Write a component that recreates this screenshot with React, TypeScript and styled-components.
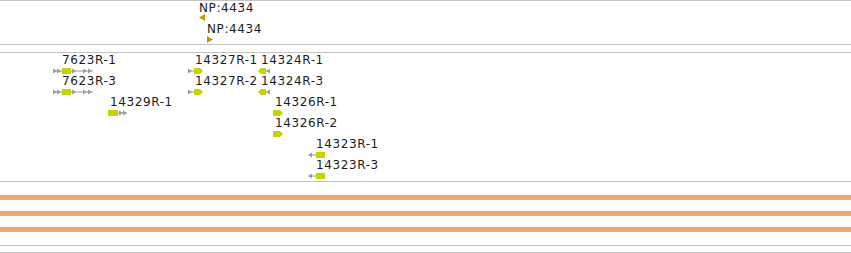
import React from 'react';
import styled, { createGlobalStyle } from 'styled-components';

const Global = createGlobalStyle`
  html, body { margin: 0; padding: 0; background: #ffffff; }
  body { font-family: "DejaVu Sans", Verdana, sans-serif; }
`;

const Page = styled.div`
  width: 851px;
  height: 253px;
  display: flex;
  flex-direction: column;
  overflow: hidden;
  background: #ffffff;
`;

const Rule = styled.div`
  flex: none;
  height: 1px;
  background: #c4c4c4;
`;

const Gap = styled.div<{ $h: number }>`
  flex: none;
  height: ${(p) => p.$h}px;
`;

const Track = styled.div<{ $h: number }>`
  flex: none;
  position: relative;
  height: ${(p) => p.$h}px;
`;

const Label = styled.span<{ $x: number; $y: number }>`
  position: absolute;
  left: ${(p) => p.$x}px;
  top: ${(p) => p.$y}px;
  font-size: 12px;
  line-height: 14px;
  letter-spacing: 0.6px;
  color: #1c1c1c;
  white-space: nowrap;
`;

const Glyph = styled.svg<{ $x: number; $y: number }>`
  position: absolute;
  left: ${(p) => p.$x}px;
  top: ${(p) => p.$y}px;
  display: block;
  overflow: visible;
`;

const BarTrack = styled.div`
  flex: none;
  display: flex;
  flex-direction: column;
  gap: 11px;
  padding: 13px 0;
`;

const Bar = styled.div`
  height: 5px;
  background: #f4a470;
`;

const GREEN = '#c6d300';
const GREY = '#9c9c9c';
const GOLD = '#c8940c';

type Part =
  | { k: 'line'; x1: number; x2: number }
  | { k: 'chev'; x: number; d: 'r' | 'l' }
  | { k: 'box'; x: number; w: number; tip?: 'r' | 'l' };

const renderPart = (p: Part, i: number) => {
  if (p.k === 'line') return <rect key={i} x={p.x1} y={2.5} width={p.x2 - p.x1} height={1} fill={GREY} />;
  if (p.k === 'chev') {
    const pts = p.d === 'r' ? `${p.x},0.5 ${p.x + 4},3 ${p.x},5.5` : `${p.x + 4},0.5 ${p.x},3 ${p.x + 4},5.5`;
    return <polygon key={i} points={pts} fill={GREY} />;
  }
  const { x, w, tip } = p;
  let pts = `${x},0 ${x + w},0 ${x + w},6 ${x},6`;
  if (tip === 'r') pts = `${x},0 ${x + w - 3},0 ${x + w},3 ${x + w - 3},6 ${x},6`;
  if (tip === 'l') pts = `${x + 3},0 ${x + w},0 ${x + w},6 ${x + 3},6 ${x},3`;
  return <polygon key={i} points={pts} fill={GREEN} />;
};

const GLYPHS: Record<string, { w: number; parts: Part[] }> = {
  A: {
    w: 41,
    parts: [
      { k: 'line', x1: 0, x2: 9 },
      { k: 'chev', x: 0, d: 'r' },
      { k: 'chev', x: 4, d: 'r' },
      { k: 'box', x: 9, w: 9 },
      { k: 'line', x1: 18, x2: 40 },
      { k: 'chev', x: 19, d: 'r' },
      { k: 'chev', x: 30, d: 'r' },
      { k: 'chev', x: 35, d: 'r' },
    ],
  },
  B: {
    w: 20,
    parts: [
      { k: 'box', x: 0, w: 10 },
      { k: 'line', x1: 10, x2: 19 },
      { k: 'chev', x: 11, d: 'r' },
      { k: 'chev', x: 15, d: 'r' },
    ],
  },
  C: {
    w: 16,
    parts: [
      { k: 'line', x1: 0, x2: 6 },
      { k: 'chev', x: 0, d: 'r' },
      { k: 'box', x: 6, w: 9, tip: 'r' },
    ],
  },
  D: {
    w: 13,
    parts: [
      { k: 'box', x: 0, w: 8, tip: 'l' },
      { k: 'line', x1: 8, x2: 12 },
      { k: 'chev', x: 8, d: 'l' },
    ],
  },
  E: {
    w: 11,
    parts: [{ k: 'box', x: 0, w: 10, tip: 'r' }],
  },
  F: {
    w: 17,
    parts: [
      { k: 'line', x1: 1, x2: 8 },
      { k: 'chev', x: 0, d: 'l' },
      { k: 'box', x: 8, w: 9 },
    ],
  },
};

const Gene = ({ type, x, y }: { type: string; x: number; y: number }) => {
  const g = GLYPHS[type];
  return (
    <Glyph $x={x} $y={y} width={g.w} height={6} viewBox={`0 0 ${g.w} 6`}>
      {g.parts.map(renderPart)}
    </Glyph>
  );
};

const Marker = ({ x, y, dir }: { x: number; y: number; dir: 'l' | 'r' }) => (
  <Glyph $x={x} $y={y} width={6} height={7} viewBox="0 0 6 7">
    <polygon points={dir === 'l' ? '0,3.5 6,0 6,7' : '0,0 6,3.5 0,7'} fill={GOLD} />
  </Glyph>
);

type Feat = { name: string; lx: number; gx: number; row: number; type: string };

const FEATURES: Feat[] = [
  { name: '7623R-1', lx: 62, gx: 53, row: 0, type: 'A' },
  { name: '7623R-3', lx: 62, gx: 53, row: 1, type: 'A' },
  { name: '14329R-1', lx: 110, gx: 108, row: 2, type: 'B' },
  { name: '14327R-1', lx: 195, gx: 188, row: 0, type: 'C' },
  { name: '14327R-2', lx: 195, gx: 188, row: 1, type: 'C' },
  { name: '14324R-1', lx: 261, gx: 258, row: 0, type: 'D' },
  { name: '14324R-3', lx: 261, gx: 258, row: 1, type: 'D' },
  { name: '14326R-1', lx: 275, gx: 273, row: 2, type: 'E' },
  { name: '14326R-2', lx: 275, gx: 273, row: 3, type: 'E' },
  { name: '14323R-1', lx: 316, gx: 308, row: 4, type: 'F' },
  { name: '14323R-3', lx: 316, gx: 308, row: 5, type: 'F' },
];

export default function App() {
  return (
    <>
      <Global />
      <Page>
        <Rule />
        <Track $h={43}>
          <Label $x={199} $y={0}>NP:4434</Label>
          <Marker x={199} y={13} dir="l" />
          <Label $x={207} $y={21}>NP:4434</Label>
          <Marker x={207} y={35} dir="r" />
        </Track>
        <Rule />
        <Gap $h={7} />
        <Rule />
        <Track $h={128}>
          {FEATURES.map((f) => (
            <React.Fragment key={f.name}>
              <Label $x={f.lx} $y={f.row * 21}>{f.name}</Label>
              <Gene type={f.type} x={f.gx} y={f.row * 21 + 15} />
            </React.Fragment>
          ))}
        </Track>
        <Rule />
        <BarTrack>
          <Bar />
          <Bar />
          <Bar />
        </BarTrack>
        <Rule />
        <Gap $h={6} />
        <Rule />
      </Page>
    </>
  );
}
